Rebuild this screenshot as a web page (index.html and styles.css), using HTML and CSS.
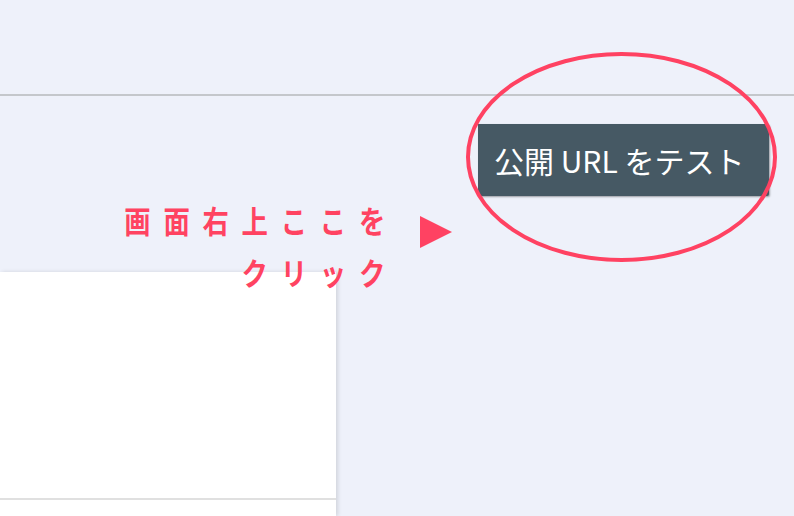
FILE: index.html
```html
<!DOCTYPE html>
<html lang="ja">
<head>
<meta charset="utf-8">
<title>公開 URL をテスト</title>
<link rel="stylesheet" href="styles.css">
</head>
<body>
<header class="topbar"></header>
<main class="main">
  <div class="toolbar">
    <div class="btn-wrap">
      <button class="test-btn">公開 URL をテスト</button>
      <svg class="circle" width="311" height="210" viewBox="0 0 311 210">
        <ellipse cx="155.5" cy="105" rx="153.5" ry="103" fill="none" stroke="#ff4262" stroke-width="4"/>
      </svg>
    </div>
  </div>
  <div class="annotation">
    <p class="note">画面右上ここを<br>クリック</p>
    <svg class="arrow" width="32" height="32" viewBox="0 0 32 32"><polygon points="0,0 32,16 0,32" fill="#ff4262"/></svg>
  </div>
  <section class="card">
    <div class="card-top"></div>
    <div class="card-bottom"></div>
  </section>
</main>
</body>
</html>
```

FILE: styles.css
```css
html, body {
  margin: 0;
  padding: 0;
}
body {
  background: #eef1fa;
  font-family: "Noto Sans CJK JP", "Noto Sans", sans-serif;
  width: 794px;
  height: 516px;
  overflow: hidden;
}
.topbar {
  height: 94px;
  border-bottom: 2px solid #c4c7cb;
}
.main {
  position: relative;
}
.toolbar {
  display: flex;
  justify-content: flex-end;
  padding: 28px 25px 0 0;
}
.btn-wrap {
  position: relative;
}
.test-btn {
  display: block;
  height: 72px;
  width: 291px;
  padding: 0 0 0 16px;
  margin: 0;
  border: 0;
  border-radius: 0 2px 2px 0;
  background: #465964;
  color: #ffffff;
  font-family: "Noto Sans CJK JP", "Noto Sans", sans-serif;
  font-size: 30px;
  text-align: left;
  white-space: nowrap;
  box-shadow: 1px 1px 2px rgba(0, 0, 0, 0.35);
}
.circle {
  position: absolute;
  left: -12px;
  top: -72px;
}
.annotation {
  position: absolute;
  left: 0;
  top: 0;
  width: 794px;
}
.note {
  position: absolute;
  right: 396px;
  top: 98px;
  margin: 0;
  text-align: right;
  color: #ff4361;
  font-size: 31px;
  font-weight: 700;
  line-height: 52px;
  letter-spacing: 15px;
  white-space: nowrap;
  transform: scaleX(0.85);
  transform-origin: right top;
}
.arrow {
  position: absolute;
  left: 420px;
  top: 120px;
}
.card {
  margin-top: 76px;
  width: 336px;
  height: 244px;
  background: #ffffff;
  box-shadow: 2px 0 4px rgba(0, 0, 0, 0.12);
}
.card-top {
  height: 226px;
  border-bottom: 2px solid #e0e0e0;
}
```
